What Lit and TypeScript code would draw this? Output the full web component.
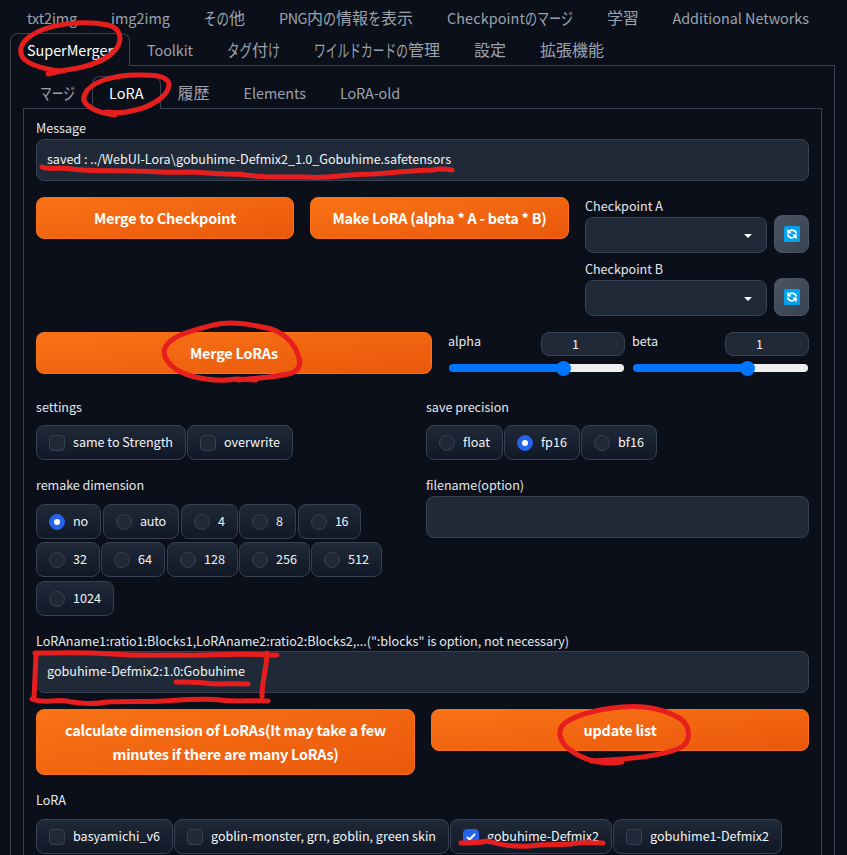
import { LitElement, html, css, svg } from "lit";
import { customElement, property } from "lit/decorators.js";
import { classMap } from "lit/directives/class-map.js";

type Segment = [text: string, width: number];
type Choice = { label: string; width: number; gap?: number; on?: boolean };

/** A run of text that is spaced to fill a given advance width. */
@customElement("fit-text")
class FitText extends LitElement {
  @property() text = "";
  @property({ type: Number }) width = 0;

  static styles = css`
    :host { display: inline-block; white-space: nowrap; }
    .run { display: inline-block; white-space: pre; transform-origin: 0 50%; }
    .cjk { font-size: 16px; }
  `;

  private get isKana() { return /^[\u3040-\u30ff]+$/.test(this.text); }
  private get isCjk() { return /[\u3040-\u9fff]/.test(this.text); }

  updated() {
    const run = this.renderRoot.querySelector<HTMLElement>(".run")!;
    run.style.letterSpacing = "0";
    run.style.transform = "none";
    const natural = run.getBoundingClientRect().width;
    if (this.isKana) run.style.transform = `scale(${this.width / natural}, 1.1)`;
    else run.style.letterSpacing = `${(this.width - natural) / this.text.length}px`;
    this.style.width = `${this.width}px`;
  }

  render() {
    return html`<span class=${classMap({ run: true, cjk: this.isCjk })}>${this.text}</span>`;
  }
}

const fit = (text: string, width: number) => html`<fit-text .text=${text} .width=${width}></fit-text>`;

@customElement("tab-row")
class TabRow extends LitElement {
  @property({ attribute: false }) tabs: Segment[][] = [];
  @property({ type: Number }) active = -1;

  static styles = css`
    :host { display: flex; height: 32px; }
    .tab {
      display: flex; align-items: center; box-sizing: border-box; height: 33px; flex: none;
      padding: 0 16px 1px; border: 1px solid transparent; border-bottom: 0;
      border-radius: 8px 8px 0 0; color: #9ca3af; font-size: 14.4px; line-height: 24px;
    }
    .active { background: #0b0f19; border-color: #374151; color: #fff; position: relative; z-index: 1; }
  `;

  render() {
    return this.tabs.map((segments, i) => html`
      <div class=${classMap({ tab: true, active: i === this.active })}>
        ${segments.map(([text, width]) => fit(text, width))}
      </div>`);
  }
}

@customElement("choice-row")
class ChoiceRow extends LitElement {
  @property({ attribute: false }) choices: Choice[] = [];
  @property({ type: Boolean }) radio = false;

  static styles = css`
    :host { display: flex; height: 35px; }
    .chip {
      display: flex; align-items: center; gap: 8px; flex: none; box-sizing: border-box; height: 35px;
      padding: 0 12px; border: 1px solid #374151; border-radius: 8px;
      background: linear-gradient(to top, #111827, #1f2937); color: #f3f4f6;
    }
    .chip fit-text { margin-bottom: 2px; }
    .mark {
      width: 16px; height: 16px; box-sizing: border-box; flex: none; display: block;
      border: 1px solid #374151; border-radius: 4px; background: #1f2937;
    }
    .round { border-radius: 50%; }
    .on { background: #2563eb; border-color: #2563eb; }
    .mark svg { display: block; width: 16px; height: 16px; margin: -1px; fill: #fff; }
  `;

  render() {
    return this.choices.map((c) => html`
      <div class="chip" style="width:${c.width}px;margin-right:${c.gap ?? 1}px">
        <span class=${classMap({ mark: true, round: this.radio, on: !!c.on })}>
          ${c.on
            ? this.radio
              ? html`<svg viewBox="0 0 16 16"><circle cx="8" cy="8" r="3"></circle></svg>`
              : html`<svg viewBox="0 0 16 16"><path d="M12.207 4.793a1 1 0 010 1.414l-5 5a1 1 0 01-1.414 0l-2-2a1 1 0 011.414-1.414L6.5 9.086l4.293-4.293a1 1 0 011.414 0z"></path></svg>`
            : ""}
        </span>
        ${fit(c.label, c.width - 50)}
      </div>`);
  }
}

@customElement("range-field")
class RangeField extends LitElement {
  @property() label = "";
  @property({ type: Number }) labelWidth = 0;

  static styles = css`
    :host { display: block; width: 177px; }
    .head { display: flex; justify-content: space-between; height: 24px; }
    .label { height: 18px; line-height: 18px; }
    .number {
      box-sizing: border-box; width: 84px; height: 24px; padding-right: 15px; border: 1px solid #374151;
      border-radius: 8px; background: #1f2937; color: #f3f4f6; text-align: center; line-height: 22px;
    }
    .track {
      display: flex; align-items: center; box-sizing: border-box; width: 175px; height: 8px; margin: 8px 0 0 1px;
      border-radius: 4px; background: linear-gradient(to right, #0075ff 65%, #efefef 65%);
    }
    .thumb { width: 15px; height: 15px; margin-left: 106.5px; border-radius: 50%; background: #0075ff; }
  `;

  render() {
    return html`
      <div class="head">
        <div class="label">${fit(this.label, this.labelWidth)}</div>
        <div class="number">1</div>
      </div>
      <div class="track"><div class="thumb"></div></div>`;
  }
}

const mainTabs: Segment[][] = [
  [["txt2img", 50]], [["img2img", 59]], [["その", 25], ["他", 16]],
  [["PNG", 28], ["内", 16], ["の", 13], ["情報", 32], ["を", 13], ["表示", 32]],
  [["Checkpoint", 78], ["のマージ", 48]], [["学習", 31.5]], [["Additional Networks", 136.5]],
];
const extensionTabs: Segment[][] = [
  [["SuperMerger", 86]], [["Toolkit", 46]], [["タグ", 25], ["付", 16], ["け", 12]],
  [["ワイルドカードの", 94], ["管理", 32]], [["設定", 32]], [["拡張機能", 64]],
];
const mergerTabs: Segment[][] = [
  [["マージ", 35]], [["LoRA", 34.5]], [["履歴", 32]], [["Elements", 62.5]], [["LoRA-old", 60]],
];

const strokes = [
  "M64 71C53 71 36 67 28 62C18 56 18 46 29 37C48 23 84 20 108 25C121 28 123 40 116 49C108 60 88 67 66 70L48 74",
  "M115 115C97 113 79 105 85 94C90 82 113 75 138 75C153 75 165 75 169 83C170 94 156 103 143 108C129 112 121 114 106 112",
  "M42 167C48 170 61 167 72 169C94 172 116 170 136 171C153 171 168 173 186 172C203 172 220 175 239 174C260 178 286 177 306 177C326 179 348 174 372 174C394 173 414 170 433 170C441 168 446 169 452 170",
  "M256 380L236 379C219 382 192 379 177 370C167 363 162 356 165 348C170 336 190 331 213 325C231 321 249 324 267 328C283 331 294 343 298 355C301 362 301 369 292 373C278 377 258 378 238 380",
  "M36 655L34 699M35 653C56 653 84 652 112 654C137 656 157 655 179 655C206 656 232 653 277 655M267 653C267 667 262 680 262 696M32 699C43 704 54 699 66 701C78 703 91 705 107 702C125 701 147 702 164 701C183 700 203 698 221 700C237 702 253 700 268 701",
  "M176 682C185 682 193 682 205 683C218 685 232 683 248 684",
  "M622 762C602 765 585 761 570 750C561 743 557 733 562 726C570 717 592 711 612 708C639 704 663 708 681 719C690 726 691 740 683 746C670 755 637 759 591 761",
  "M461 843C469 843 479 843 488 841C500 845 513 847 530 846C543 844 556 845 570 844C581 842 592 843 603 843",
];

@customElement("app-root")
class AppRoot extends LitElement {
  static styles = css`
    :host {
      display: block; position: relative; box-sizing: border-box; width: 847px; height: 855px; overflow: hidden;
      padding: 1px 12px 0 10px; background: #0b0f19; color: #e5e7eb;
      font-family: "Noto Sans CJK JP", "Noto Sans", sans-serif; font-size: 12.6px; line-height: 20px;
    }
    .outer { box-sizing: border-box; width: 825px; height: 800px; padding: 10px 12px 0; border: 1px solid #374151; }
    .inner { box-sizing: border-box; width: 799px; height: 760px; padding: 9px 12px 0; border: 1px solid #374151; }
    .label { height: 21px; line-height: 19px; }
    .prompt { line-height: 21px; }
    .field {
      display: flex; align-items: center; box-sizing: border-box; height: 42px; padding: 0 10px 2px;
      border: 1px solid #374151; border-radius: 8px; background: #1f2937; color: #f3f4f6;
    }
    .row { display: flex; gap: 16px; align-items: flex-start; }
    .btn {
      display: flex; flex-direction: column; align-items: center; justify-content: center; box-sizing: border-box;
      height: 42px; flex: none; padding-bottom: 0; border: 1px solid #f97316; border-radius: 8px;
      background: linear-gradient(to bottom right, #f97316, #ea580c); color: #fff;
      font-size: 14.4px; font-weight: 700; line-height: 24px;
    }
    .top { height: 135px; margin-top: 16px; }
    .checkpoint { width: 258px; }
    .make { width: 259px; }
    .merge { width: 396px; }
    .calc { width: 379px; height: 66px; }
    .update { width: 378px; }
    .sources { width: 224px; }
    .source { display: flex; justify-content: space-between; align-items: flex-end; height: 56px; margin-bottom: 7px; }
    .source .label { height: 20px; line-height: 18px; }
    .select {
      display: flex; align-items: center; justify-content: flex-end; box-sizing: border-box; width: 182px;
      height: 36px; padding: 2px 14px 0 0; border: 1px solid #374151; border-radius: 8px; background: #1f2937;
    }
    .select svg { width: 8px; height: 4px; fill: #fff; }
    .refresh {
      display: flex; align-items: center; justify-content: center; box-sizing: border-box; width: 35px; height: 38px;
      border: 1px solid #4b5563; border-radius: 8px; background: linear-gradient(to bottom right, #4b5563, #374151);
    }
    .refresh svg { width: 16px; height: 16px; }
    .ranges { display: flex; gap: 7px; }
    .half { width: 374px; }
    .options { margin-top: 23px; height: 78px; }
    .options .label { margin-bottom: 7px; }
    .sizes { height: 155px; }
    .half.dims .label { margin-bottom: 8px; }
    .dims choice-row { margin-bottom: 3px; }
    .dims choice-row + choice-row { margin-bottom: 4px; }
    .wide { width: 383px; }
    .pushed { margin-top: 16px; }
    .listing { margin-top: 15px; height: 29px; line-height: 20px; }
    .ink { position: absolute; z-index: 5; left: 0; top: 0; width: 847px; height: 855px; }
    .ink path { fill: none; stroke: #e61e1e; stroke-width: 5; stroke-linecap: round; stroke-linejoin: round; }
  `;

  private source(name: string) {
    return html`
      <div class="source">
        <div>
          <div class="label">${fit(name, 78)}</div>
          <div class="select"><svg viewBox="0 0 8 4"><path d="M0 0H8L4 4Z"></path></svg></div>
        </div>
        <div class="refresh">
          <svg viewBox="0 0 16 16">
            <rect width="16" height="16" rx="1.5" fill="#00a2ed"></rect>
            <path d="M5 5.4Q7 3.9 9.2 4.3Q11.8 4.8 12.1 7.6M11 10.6Q9 12.1 6.8 11.7Q4.2 11.2 3.9 8.4" fill="none" stroke="#fff" stroke-width="1.8"></path>
            <path d="M3.2 2.8V7.4H7.8ZM12.8 13.2V8.6H8.2Z" fill="#fff"></path>
          </svg>
        </div>
      </div>`;
  }

  render() {
    return html`
      <tab-row .tabs=${mainTabs}></tab-row>
      <tab-row .tabs=${extensionTabs} .active=${0}></tab-row>
      <div class="outer">
        <tab-row .tabs=${mergerTabs} .active=${1}></tab-row>
        <div class="inner">
          <div class="label">${fit("Message", 50)}</div>
          <div class="field">${fit("saved : ../WebUI-Lora\\gobuhime-Defmix2_1.0_Gobuhime.safetensors", 404)}</div>

          <div class="row top">
            <div class="btn checkpoint">${fit("Merge to Checkpoint", 142)}</div>
            <div class="btn make">${fit("Make LoRA (alpha * A - beta * B)", 214)}</div>
            <div class="sources">${this.source("Checkpoint A")}${this.source("Checkpoint B")}</div>
          </div>

          <div class="row">
            <div class="btn merge">${fit("Merge LoRAs", 88)}</div>
            <div class="ranges">
              <range-field label="alpha" .labelWidth=${33}></range-field>
              <range-field label="beta" .labelWidth=${26}></range-field>
            </div>
          </div>

          <div class="row options">
            <div class="half">
              <div class="label">${fit("settings", 46)}</div>
              <choice-row .choices=${[{ label: "same to Strength", width: 150 }, { label: "overwrite", width: 106 }]}></choice-row>
            </div>
            <div>
              <div class="label">${fit("save precision", 83)}</div>
              <choice-row radio .choices=${[
                { label: "float", width: 77 }, { label: "fp16", width: 76, on: true }, { label: "bf16", width: 76 },
              ]}></choice-row>
            </div>
          </div>

          <div class="row sizes">
            <div class="half dims">
              <div class="label">${fit("remake dimension", 108)}</div>
              <choice-row radio .choices=${[
                { label: "no", width: 65, gap: 2, on: true }, { label: "auto", width: 76, gap: 2 },
                { label: "4", width: 57 }, { label: "8", width: 57, gap: 2 }, { label: "16", width: 63 },
              ]}></choice-row>
              <choice-row radio .choices=${[
                { label: "32", width: 64 }, { label: "64", width: 64, gap: 2 }, { label: "128", width: 71 },
                { label: "256", width: 71 }, { label: "512", width: 71 },
              ]}></choice-row>
              <choice-row radio .choices=${[{ label: "1024", width: 78 }]}></choice-row>
            </div>
            <div class="wide">
              <div class="label">${fit("filename(option)", 98)}</div>
              <div class="field"></div>
            </div>
          </div>

          <div class="label prompt">${fit('LoRAname1:ratio1:Blocks1,LoRAname2:ratio2:Blocks2,...(":blocks" is option, not necessary)', 533)}</div>
          <div class="field">${fit("gobuhime-Defmix2:1.0:Gobuhime", 198)}</div>

          <div class="row pushed">
            <div class="btn calc">
              ${fit("calculate dimension of LoRAs(It may take a few", 321)}
              ${fit("minutes if there are many LoRAs)", 226)}
            </div>
            <div class="btn update">${fit("update list", 73)}</div>
          </div>

          <div class="label listing">${fit("LoRA", 30)}</div>
          <choice-row .choices=${[
            { label: "basyamichi_v6", width: 137 }, { label: "goblin-monster, grn, goblin, green skin", width: 275 },
            { label: "gobuhime-Defmix2", width: 162, on: true }, { label: "gobuhime1-Defmix2", width: 169 },
          ]}></choice-row>
        </div>
      </div>
      <svg class="ink" viewBox="0 0 847 855">${strokes.map((d) => svg`<path d=${d}></path>`)}</svg>`;
  }
}
